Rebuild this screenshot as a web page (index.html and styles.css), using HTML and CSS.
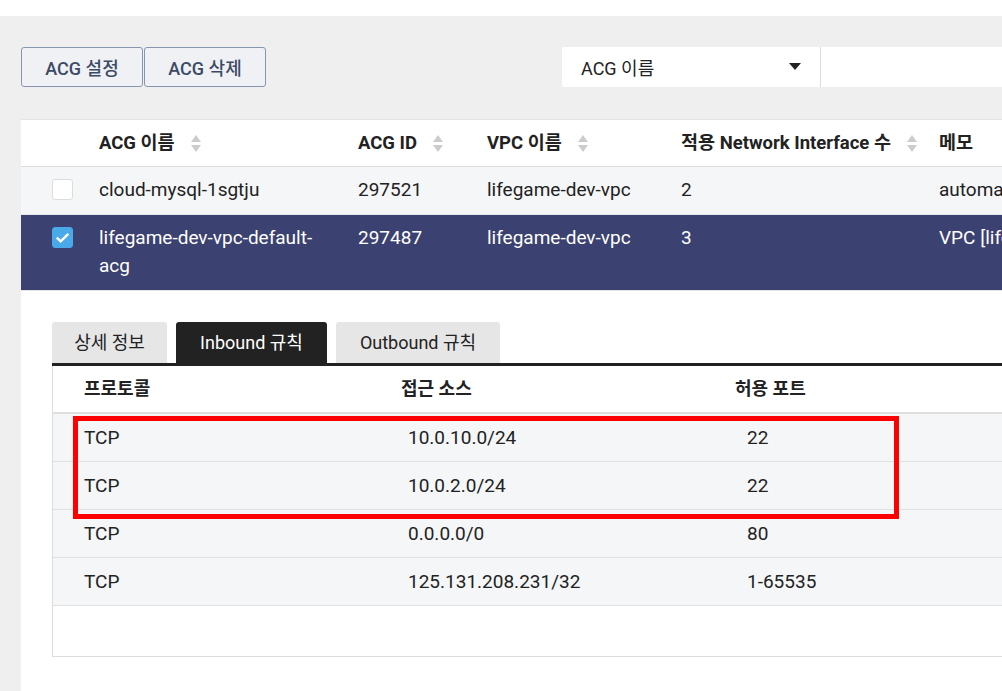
FILE: index.html
```html
<!DOCTYPE html>
<html lang="ko">
<head>
<meta charset="utf-8">
<title>ACG</title>
<link rel="stylesheet" href="styles.css">
</head>
<body>
<div class="topbar"></div>
<div class="page">
  <div class="toolbar">
    <div class="btn-group">
      <button class="btn">ACG 설정</button>
      <button class="btn">ACG 삭제</button>
    </div>
    <div class="search">
      <div class="select">
        <span>ACG 이름</span>
        <svg class="caret" width="12" height="7" viewBox="0 0 12 7"><path d="M0 0h12L6 7z" fill="#222"/></svg>
      </div>
      <div class="input"></div>
    </div>
  </div>

  <div class="panel">
    <div class="grid head">
      <div class="cell"></div>
      <div class="cell">ACG 이름<span class="sort"><i class="up"></i><i class="down"></i></span></div>
      <div class="cell">ACG ID<span class="sort"><i class="up"></i><i class="down"></i></span></div>
      <div class="cell">VPC 이름<span class="sort"><i class="up"></i><i class="down"></i></span></div>
      <div class="cell">적용 Network Interface 수<span class="sort"><i class="up"></i><i class="down"></i></span></div>
      <div class="cell">메모</div>
    </div>
    <div class="grid row">
      <div class="cell chk-cell"><span class="chk"></span></div>
      <div class="cell">cloud-mysql-1sgtju</div>
      <div class="cell">297521</div>
      <div class="cell">lifegame-dev-vpc</div>
      <div class="cell">2</div>
      <div class="cell memo">automatically created ACG for Cloud DB for MySQL</div>
    </div>
    <div class="grid row selected">
      <div class="cell chk-cell"><span class="chk on"><svg width="21" height="21" viewBox="0 0 21 21"><path d="M4.8 10.6l3.9 3.8L16.3 6.8" fill="none" stroke="#fff" stroke-width="2.4"/></svg></span></div>
      <div class="cell">lifegame-dev-vpc-default-acg</div>
      <div class="cell">297487</div>
      <div class="cell">lifegame-dev-vpc</div>
      <div class="cell">3</div>
      <div class="cell memo">VPC [lifegame-dev-vpc] default ACG</div>
    </div>

    <div class="detail">
      <div class="tabs">
        <div class="tab tab-info">상세 정보</div>
        <div class="tab tab-in active">Inbound 규칙</div>
        <div class="tab tab-out">Outbound 규칙</div>
      </div>
      <div class="rules">
        <div class="rgrid rhead">
          <div class="rc">프로토콜</div>
          <div class="rc">접근 소스</div>
          <div class="rc">허용 포트</div>
        </div>
        <div class="rgrid rrow">
          <div class="rc c1">TCP</div><div class="rc c2">10.0.10.0/24</div><div class="rc c3">22</div>
        </div>
        <div class="rgrid rrow">
          <div class="rc c1">TCP</div><div class="rc c2">10.0.2.0/24</div><div class="rc c3">22</div>
        </div>
        <div class="rgrid rrow">
          <div class="rc c1">TCP</div><div class="rc c2">0.0.0.0/0</div><div class="rc c3">80</div>
        </div>
        <div class="rgrid rrow">
          <div class="rc c1">TCP</div><div class="rc c2">125.131.208.231/32</div><div class="rc c3">1-65535</div>
        </div>
        <div class="highlight"></div>
      </div>
    </div>
  </div>
</div>
</body>
</html>
```

FILE: styles.css
```css
html, body {
  margin: 0;
  padding: 0;
  overflow: hidden;
  height: 100%;
}
body {
  background: #efefef;
  font-family: Roboto, "Noto Sans CJK KR", sans-serif;
  color: #222;
  width: 1002px;
}
.topbar {
  height: 16px;
  background: #fff;
}
.page {
  padding: 31px 0 0 21px;
}
.toolbar {
  display: flex;
  height: 40px;
  width: 1300px;
}
.btn-group {
  display: flex;
  gap: 1px;
}
.btn {
  width: 122px;
  height: 40px;
  box-sizing: border-box;
  border: 1px solid #8796b0;
  border-radius: 3px;
  background: #eff1f4;
  color: #3b4a66;
  font-family: Roboto, "Noto Sans CJK KR", sans-serif;
  font-size: 18px;
  font-weight: 500;
  padding: 0;
}
.search {
  display: flex;
  margin-left: 296px;
  height: 40px;
}
.select {
  width: 259px;
  box-sizing: border-box;
  background: #fff;
  border-right: 1px solid #dcdcdc;
  border-radius: 2px 0 0 2px;
  display: flex;
  align-items: center;
  justify-content: space-between;
  padding: 0 19px 0 19px;
  font-size: 18px;
  color: #222;
}
.caret {
  margin-top: -2px;
}
.input {
  width: 400px;
  background: #fff;
}
.panel {
  margin-top: 32px;
  background: #fff;
  width: 1300px;
  height: 600px;
  border-top: 1px solid #e4e4e4;
}
.grid {
  display: grid;
  grid-template-columns: 62px 259px 129px 194px 258px 398px;
}
.cell {
  padding: 9px 16px 10px;
  line-height: 28px;
  font-size: 19px;
  display: flex;
  align-items: flex-start;
}
.head {
  height: 46px;
  border-bottom: 1px solid #dcdcdc;
}
.head .cell {
  font-weight: 700;
  font-size: 18.5px;
  align-items: center;
  padding-top: 0;
  padding-bottom: 0;
  height: 46px;
  white-space: nowrap;
}
.sort {
  display: inline-flex;
  flex-direction: column;
  flex: none;
  gap: 3px;
  margin-left: 16px;
}
.sort i {
  width: 0;
  height: 0;
  border-left: 5px solid transparent;
  border-right: 5px solid transparent;
}
.sort .up { border-bottom: 7px solid #cccccc; }
.sort .down { border-top: 7px solid #cccccc; }
.row {
  background: #f5f6f8;
  border-bottom: 1px solid #e6e6e6;
}
.row.selected {
  background: #3b4171;
  color: #fff;
  border-bottom: 1px solid #e4e4e4;
}
.chk-cell {
  padding: 12px 0 0 31px;
}
.chk {
  display: block;
  flex: none;
  width: 21px;
  height: 21px;
  box-sizing: border-box;
  border: 1px solid #dcdcdc;
  border-radius: 3px;
  background: #fff;
}
.chk.on {
  background: #4aa9e9;
  border-color: #4aa9e9;
}
.chk svg {
  display: block;
  margin: -1px;
}
.memo {
  white-space: nowrap;
  overflow: hidden;
}
.detail {
  padding: 31px 0 0 31px;
}
.tabs {
  display: flex;
  gap: 9px;
  height: 41px;
  border-bottom: 3px solid #222;
}
.tab {
  background: #e6e6e6;
  border-radius: 3px 3px 0 0;
  font-size: 18px;
  line-height: 41px;
  text-align: center;
  color: #222;
}
.tab-info { width: 115px; }
.tab-in { width: 151px; }
.tab-out { width: 164px; }
.tab.active {
  background: #222;
  color: #fff;
}
.rules {
  position: relative;
  height: 291px;
  box-sizing: border-box;
  border-left: 1px solid #dcdcdc;
  border-bottom: 1px solid #dcdcdc;
}
.rgrid {
  display: grid;
  grid-template-columns: 317px 334px 600px;
}
.rhead {
  height: 46px;
  border-bottom: 2px solid #dedede;
}
.rhead .rc {
  font-weight: 700;
  font-size: 18px;
  line-height: 46px;
  padding-left: 31px;
}
.rrow {
  background: #f5f6f8;
  height: 47px;
  border-bottom: 1px solid #e0e0e0;
}
.rrow:last-of-type {
  border-bottom: 0;
}
.rc {
  font-size: 19px;
  line-height: 47px;
}
.c1 { padding-left: 31px; }
.c2 { padding-left: 38px; }
.c3 { padding-left: 43px; }
.highlight {
  position: absolute;
  left: 20px;
  top: 50px;
  width: 826px;
  height: 103px;
  box-sizing: border-box;
  border: 5px solid #ff0000;
  pointer-events: none;
}
```
